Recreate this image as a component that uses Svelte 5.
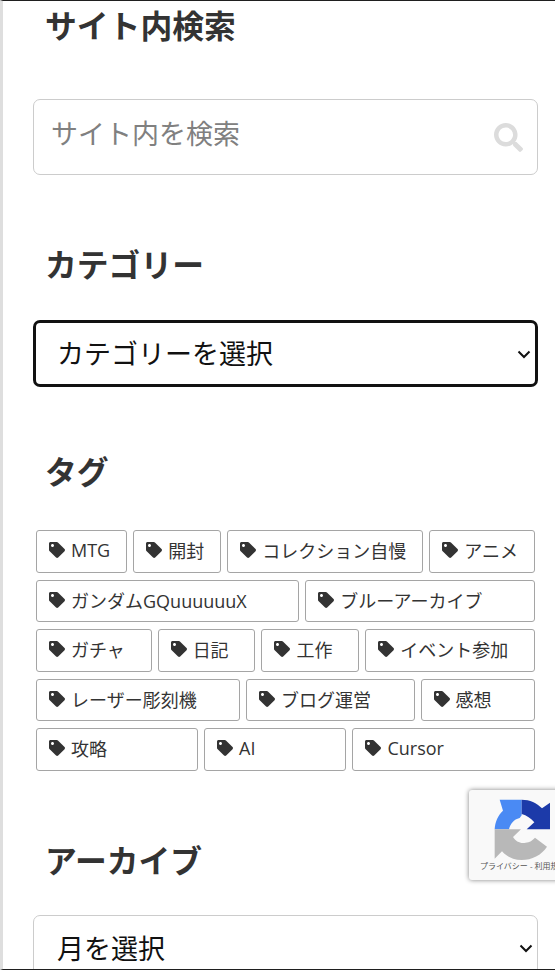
<script>
  const tags = ['MTG', '開封', 'コレクション自慢', 'アニメ', 'ガンダムGQuuuuuuX', 'ブルーアーカイブ', 'ガチャ', '日記', '工作', 'イベント参加', 'レーザー彫刻機', 'ブログ運営', '感想', '攻略', 'AI', 'Cursor']
</script>

<div class="page">
  <section class="first">
    <h3>サイト内検索</h3>
    <form class="search" on:submit|preventDefault>
      <input type="text" placeholder="サイト内を検索" />
      <svg class="search-icon" viewBox="0 0 512 512"><path d="M505 442.7L405.3 343c-4.5-4.5-10.6-7-17-7H372c27.6-35.3 44-79.7 44-128C416 93.1 322.9 0 208 0S0 93.1 0 208s93.1 208 208 208c48.3 0 92.7-16.4 128-44v16.3c0 6.4 2.5 12.5 7 17l99.7 99.7c9.4 9.4 24.6 9.4 33.9 0l28.3-28.3c9.4-9.4 9.4-24.6.1-34zM208 336c-70.7 0-128-57.2-128-128 0-70.7 57.2-128 128-128 70.7 0 128 57.2 128 128 0 70.7-57.2 128-128 128z"/></svg>
    </form>
  </section>

  <section class="cat">
    <h3>カテゴリー</h3>
    <div class="select focused">
      <select><option>カテゴリーを選択</option></select>
      <svg viewBox="0 0 14 9"><path d="M1.5 1.5 7 7l5.5-5.5" /></svg>
    </div>
  </section>

  <section class="tagsec">
    <h3>タグ</h3>
    <div class="tags">
      {#each tags as t}
        <a class="tag" href="#top">
          <svg viewBox="0 0 512 512"><path d="M0 252.118V48C0 21.49 21.49 0 48 0h204.118a48 48 0 0 1 33.941 14.059l211.882 211.882c18.745 18.745 18.745 49.137 0 67.882L293.823 497.941c-18.745 18.745-49.137 18.745-67.882 0L14.059 286.059A48 48 0 0 1 0 252.118zM112 64c-26.51 0-48 21.49-48 48s21.49 48 48 48 48-21.49 48-48-21.49-48-48-48z"/></svg>
          <span>{t}</span>
        </a>
      {/each}
    </div>
  </section>

  <section class="arch">
    <h3>アーカイブ</h3>
    <div class="select">
      <select><option>月を選択</option></select>
      <svg viewBox="0 0 14 9"><path d="M1.5 1.5 7 7l5.5-5.5" /></svg>
    </div>
  </section>

  <div class="recaptcha">
    <svg viewBox="0 0 210 270" width="70" height="90">
      <path fill="#4a8af4" d="M29 118C30 96 39 76 54 62L44 29H110V76L104 84C86 88 76 102 72 118Z" />
      <path fill="#1c3aa9" d="M110 29C135 29 155 39 171 55L195 38V118H125L148 97C138 85 125 76 110 72Z" />
      <path fill="#b8b8b8" d="M29 118H108L84 141C92 155 108 162 122 158 134 157 143 151 150 143L186 170C170 195 140 210 110 210 85 210 65 200 51 184L29 206Z" />
    </svg>
    <div class="rc-links">プライバシー - 利用規約</div>
  </div>
</div>

<style>
  :global(body) {
    margin: 0;
    background: #fff;
  }

  .page {
    position: relative;
    box-sizing: border-box;
    width: 555px;
    height: 970px;
    overflow: hidden;
    border-top: 1px solid #1f1f1f;
    border-bottom: 1px solid #1f1f1f;
    border-left: 3px solid #dedede;
    padding-left: 30px;
    font-family: "Open Sans", "Noto Sans CJK JP", sans-serif;
    color: #333;
  }

  h3 {
    margin: 0 0 0 12px;
    font-size: 31.8px;
    line-height: 46px;
    font-weight: 700;
    color: #333;
  }

  .first {
    margin-top: 2px;
  }

  .search {
    position: relative;
    margin-top: 50px;
    width: 505px;
  }

  input {
    display: block;
    box-sizing: border-box;
    width: 100%;
    height: 76px;
    padding: 0 17px 7px;
    border: 1px solid #ccc;
    border-radius: 7px;
    font-family: inherit;
    font-size: 27px;
    outline: none;
  }

  input::placeholder {
    color: #808080;
  }

  .search-icon {
    position: absolute;
    top: 24px;
    right: 15px;
    width: 29px;
    height: 29px;
    fill: #dcdcdc;
  }

  .cat {
    margin-top: 67px;
  }

  .select {
    position: relative;
    box-sizing: border-box;
    width: 505px;
    height: 67px;
    margin-top: 32px;
    background: #fff;
    border: 1px solid #ccc;
    border-radius: 7px;
  }

  .select svg {
    position: absolute;
    top: 50%;
    right: 4px;
    width: 14px;
    height: 9px;
    margin-top: -4px;
    fill: none;
    stroke: #111;
    stroke-width: 2;
  }

  select {
    appearance: none;
    display: block;
    width: 100%;
    height: 100%;
    padding: 0 22px;
    background: transparent;
    border: 0;
    outline: none;
    font-family: inherit;
    font-size: 27px;
    color: #111;
  }

  .focused {
    border: 3px solid #111;
  }

  .focused select {
    padding: 0 21px;
  }

  .tagsec {
    margin-top: 62px;
  }

  .tags {
    display: flex;
    flex-wrap: wrap;
    gap: 7px 6px;
    width: 499px;
    margin: 35px 0 0 3px;
  }

  .tag {
    display: flex;
    flex-grow: 1;
    align-items: center;
    gap: 6px;
    box-sizing: border-box;
    height: 42.5px;
    padding: 0 13px 2px 12px;
    border: 1px solid #a5a5a5;
    border-radius: 3px;
    font-size: 18px;
    color: #333;
    text-decoration: none;
    white-space: nowrap;
  }

  .tag svg {
    width: 16px;
    height: 16px;
    fill: #333;
    flex-shrink: 0;
  }

  .arch {
    margin-top: 67px;
  }

  .arch .select {
    margin-top: 31px;
  }

  .arch select {
    padding: 0 23px;
  }

  .recaptcha {
    position: absolute;
    top: 789px;
    left: 466px;
    width: 256px;
    height: 90px;
    border-radius: 3px;
    background: #f9f9f9;
    box-shadow: 0 0 5px #808080;
  }

  .recaptcha svg {
    position: absolute;
    left: 16px;
    top: 0;
    filter: blur(0.4px);
  }

  .rc-links {
    position: absolute;
    top: 70px;
    left: 11px;
    font-size: 8px;
    color: #555;
    white-space: nowrap;
  }
</style>
